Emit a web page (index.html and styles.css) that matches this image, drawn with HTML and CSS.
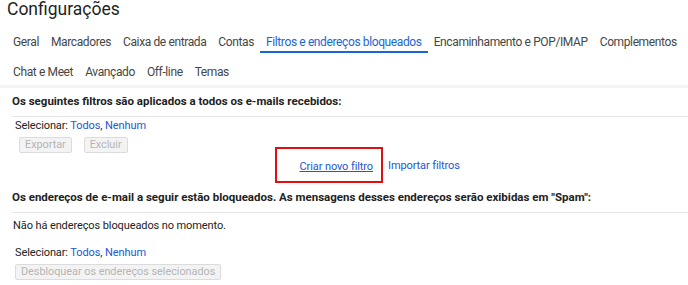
FILE: index.html
```html
<!DOCTYPE html>
<html lang="pt-BR">
<head>
<meta charset="utf-8">
<link rel="stylesheet" href="styles.css">
</head>
<body>
<div class="page">
  <h1 class="title">Configurações</h1>
  <nav class="tabs">
    <div class="tab-row">
      <span class="tab">Geral</span>
      <span class="tab">Marcadores</span>
      <span class="tab">Caixa de entrada</span>
      <span class="tab">Contas</span>
      <span class="tab active">Filtros e endereços bloqueados</span>
      <span class="tab">Encaminhamento e POP/IMAP</span>
      <span class="tab">Complementos</span>
    </div>
    <div class="tab-row second">
      <span class="tab">Chat e Meet</span>
      <span class="tab">Avançado</span>
      <span class="tab">Off-line</span>
      <span class="tab">Temas</span>
    </div>
  </nav>
  <div class="band"></div>
  <section class="section">
    <div class="heading">Os seguintes filtros são aplicados a todos os e-mails recebidos:</div>
    <div class="body">
      <div class="select">Selecionar: <a class="link">Todos</a>, <a class="link">Nenhum</a></div>
      <div class="buttons">
        <button class="btn" disabled>Exportar</button>
        <button class="btn" disabled>Excluir</button>
      </div>
      <div class="actions">
        <div class="highlight"><a class="link underline">Criar novo filtro</a></div>
        <a class="link">Importar filtros</a>
      </div>
    </div>
  </section>
  <section class="section blocked">
    <div class="heading">Os endereços de e-mail a seguir estão bloqueados. As mensagens desses endereços serão exibidas em "Spam":</div>
    <div class="body">
      <div class="none">Não há endereços bloqueados no momento.</div>
      <div class="select">Selecionar: <a class="link">Todos</a>, <a class="link">Nenhum</a></div>
      <div class="buttons">
        <button class="btn" disabled>Desbloquear os endereços selecionados</button>
      </div>
    </div>
  </section>
</div>
</body>
</html>
```

FILE: styles.css
```css
* { box-sizing: border-box; }
html, body { margin: 0; padding: 0; background: #fff; }
body { font-family: Roboto, "Noto Sans", Arial, sans-serif; color: #222; overflow: hidden; }
.page { width: 688px; }
.title {
  margin: 0;
  padding: 0 0 0 7px;
  font-size: 17.5px;
  font-weight: 400;
  line-height: 18px;
  color: #1f1f1f;
}
.tabs { padding: 10px 0 0 7px; }
.tab-row { display: flex; white-space: nowrap; }
.tab {
  display: block;
  padding: 6px 6px 1px;
  font-size: 12px;
  letter-spacing: -0.38px;
  line-height: 16px;
  color: #444746;
  border-bottom: 2px solid transparent;
}
.tab.active { color: #1a66d9; border-bottom-color: #1a66d9; }
.tab-row.second .tab { padding-top: 11px; padding-bottom: 2px; }
.band { height: 3px; background: #f5f5f5; margin-top: 1px; }
.section { padding: 0 0 0 12px; }
.heading {
  font-weight: 700;
  font-size: 11.5px;
  line-height: 14px;
  padding: 6px 0 8px 0;
  border-bottom: 1px solid #e4e4e4;
  color: #222;
  white-space: nowrap;
}
.body { padding: 2px 0 0 1px; font-size: 11px; letter-spacing: -0.1px; color: #222; }
.select { line-height: 14px; padding-left: 2px; }
.link { color: #2456d3; text-decoration: none; }
.link.underline { text-decoration: underline; }
.buttons { display: flex; gap: 12px; padding: 4px 0 0 6px; }
.btn {
  font-family: inherit;
  font-size: 10.8px;
  letter-spacing: 0;
  color: #b5b5b5;
  background: #f3f3f3;
  border: 1px solid #dcdcdc;
  border-radius: 2px;
  height: 16px;
  padding: 0 5px;
  line-height: 14px;
}
.actions { display: flex; align-items: center; padding-left: 262px; margin-top: -6px; }
.highlight {
  width: 108px;
  height: 36px;
  border: 2px solid #e01010;
  display: flex;
  align-items: center;
  justify-content: flex-end;
  padding: 2px 8px 0 0;
  margin-right: 5px;
}
.blocked .heading { padding-top: 7px; padding-bottom: 8px; }
.none { padding: 4px 0 13px 0; line-height: 14px; }
.blocked .buttons { padding-left: 2px; }
```
